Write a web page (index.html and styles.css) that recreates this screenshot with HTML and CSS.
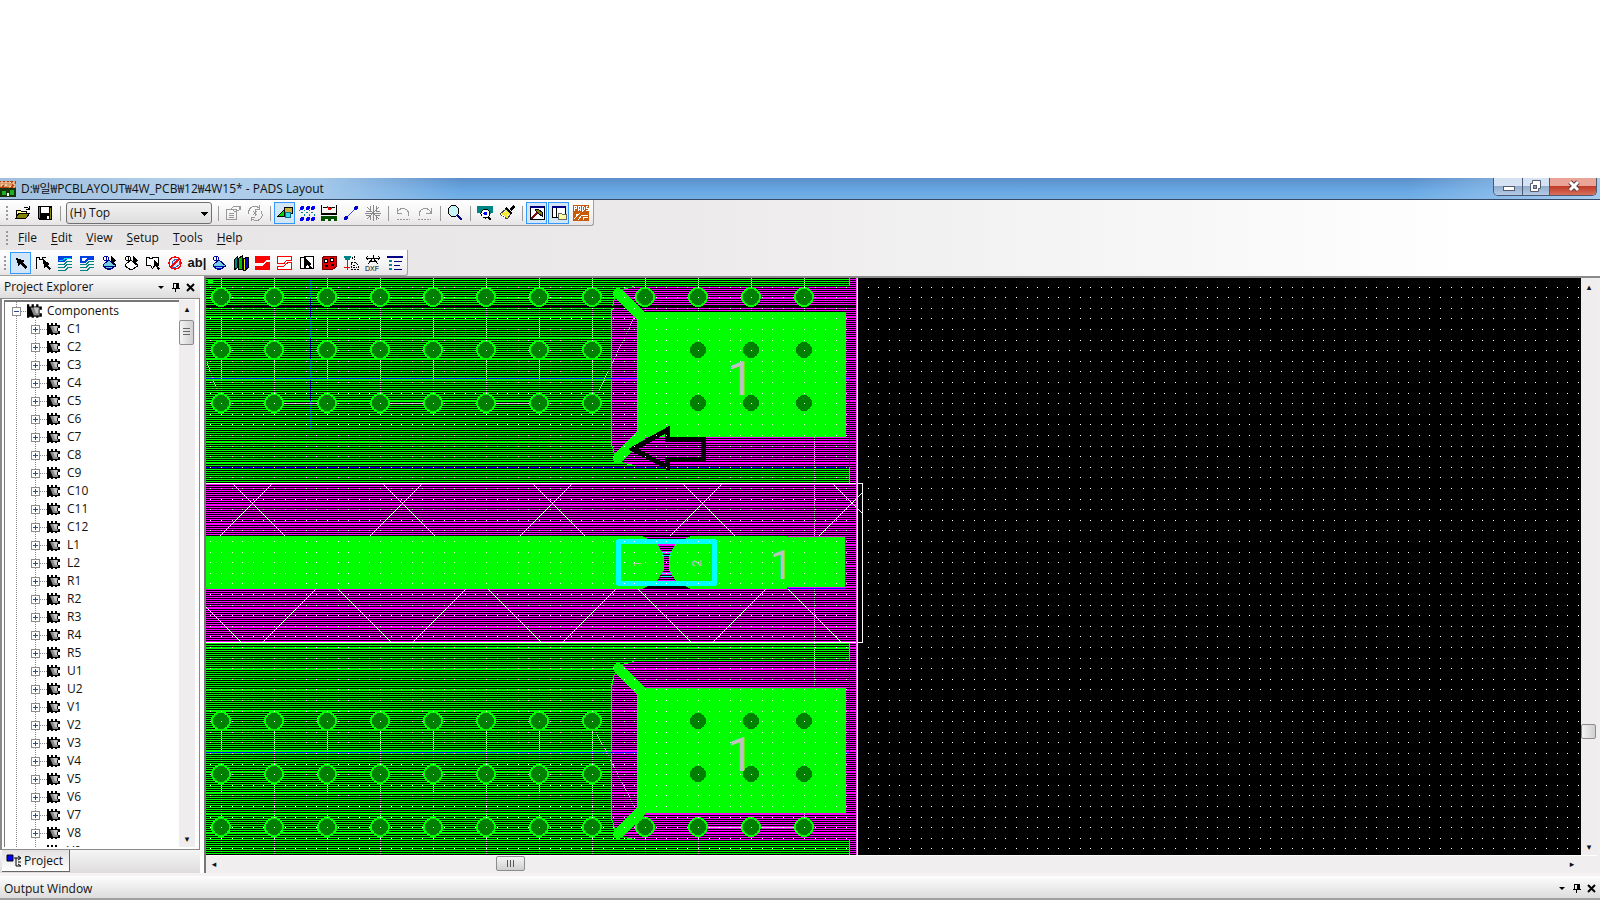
FILE: index.html
```html
<!DOCTYPE html>
<html lang="en">
<head>
<meta charset="utf-8">
<title>PADS Layout</title>
<link rel="stylesheet" href="styles.css">
</head>
<body>
<div class="app">
  <header class="titlebar">
    <svg class="logo" width="16" height="16" viewBox="0 0 16 16"><rect width="16" height="16" fill="#b5420c"/><rect y="7" width="16" height="9" fill="#17330d"/><path d="M1 6V1h2v3H1M5 6V1h2v5M5 4h2M9 1v5h1l1-1V2l-1-1zM15 1h-2v2h2v3h-2" fill="none" stroke="#fff3d0"/><path d="M2 10h4v4H2zM10 9h4v5h-4z" fill="#1fae1f"/><path d="M7 12h2v3H7z" fill="#fff"/></svg>
    <h1 class="title">D:₩일₩PCBLAYOUT₩4W_PCB₩12₩4W15* - PADS Layout</h1>
    <div class="winbtns">
      <button class="wb" aria-label="Minimize"><svg width="28" height="17"><rect x="9.500" y="8.500" width="11" height="4" fill="#fff" stroke="#555b68"/></svg></button>
      <button class="wb" aria-label="Restore"><svg width="26" height="17"><path d="M9.500 2.500h8v8h-2v3h-8v-8h2z" fill="#fff" stroke="#555b68"/><rect x="10.500" y="7.500" width="3" height="3" fill="#8fa6c6" stroke="#555b68"/></svg></button>
      <button class="wb close" aria-label="Close"><svg width="46" height="17"><path d="M20 4l8 8M28 4l-8 8" stroke="#5c4040" stroke-width="5"/><path d="M20 4l8 8M28 4l-8 8" stroke="#fff" stroke-width="3"/></svg></button>
    </div>
  </header>

  <div class="bars">
    <div class="toolbar main-tools">
      <span class="grip"></span>
      <button class="tb" aria-label="Open"><svg viewBox="0 0 16 16"><path d="M1 13V5h4l1 1h5v3" fill="#ffff9c" stroke="#000"/><path d="M1 13l3-5h11l-4 5z" fill="#848400" stroke="#000"/><path d="M9 3q3-2 5 1M14 1v3h-3" fill="none" stroke="#000"/></svg></button>
      <button class="tb" aria-label="Save"><svg viewBox="0 0 16 16"><path d="M1 1h14v14H2l-1-1z"/><path d="M4 2h8v6H4z" fill="#fff"/><path d="M2 2h1v11H2zM13 3h1v11h-1z" fill="#848400"/><path d="M10 11h2v3h-2z" fill="#fff"/></svg></button>
      <span class="sep"></span>
      <select class="layer" aria-label="Layer"><option>(H) Top</option></select>
      <span class="sep"></span>
      <button class="tb" aria-label="Properties"><svg viewBox="0 0 16 16" fill="none" stroke="#999"><path d="M1.500 4.500h10v10h-10zM4 8h5M4 10h5M4 12h5M6 4l3-3 5 1v3l-4 2-2-2M12 1h3v4"/></svg></button>
      <button class="tb" aria-label="Cycle"><svg viewBox="0 0 16 16" fill="none" stroke="#999"><path d="M2 9a6 6 0 0 1 10-6M14 6a6 6 0 0 1-10 7M12 0v4H8M4 16v-4h4M6 6l4 4M10 6l-4 4M8 5v6"/></svg></button>
      <span class="sep"></span>
      <button class="tb on" aria-label="Drafting Toolbar"><svg viewBox="0 0 16 16"><path d="M7.500 2.500h8v6h-8z" fill="#c8b43c" stroke="#000"/><path d="M1 11l6-6v6z" fill="#00d800" stroke="#000"/><circle cx="11" cy="10" r="3" fill="#38d8f0" stroke="#087080"/></svg></button>
      <button class="tb" aria-label="Design Toolbar"><svg viewBox="0 0 16 16" fill="#00f"><circle cx="3" cy="3" r="2"/><circle cx="9" cy="3" r="2"/><circle cx="14" cy="3" r="2"/><circle cx="3" cy="14" r="2"/><circle cx="9" cy="14" r="2"/><circle cx="14" cy="14" r="2"/><path d="M0 5l5 4v3M5 5l5 4v3M10 5l5 4v3" fill="none" stroke="#088" stroke-dasharray="2 1"/></svg></button>
      <button class="tb" aria-label="Dimensioning Toolbar"><svg viewBox="0 0 16 16"><path d="M0 0h1v9H0zM15 0h1v9h-1zM0 8h16v2H0z"/><path d="M2 2.500h12" stroke="#000"/><path d="M6 1l3 4 2-3M7 4h3" stroke="red" fill="none"/><path d="M0 11h16v5h-3v-2h-3v2H7v-2H4v2H0z" fill="#005000"/></svg></button>
      <button class="tb" aria-label="Route"><svg viewBox="0 0 16 16"><path d="M3 13L13 3" stroke="#44f"/><circle cx="3" cy="13" r="2" fill="#00c"/><circle cx="13" cy="3" r="2" fill="#00c"/></svg></button>
      <button class="tb" aria-label="ECO Toolbar"><svg viewBox="0 0 16 16" fill="none" stroke="#888"><path d="M8 0v16M0 8h16M2 2l12 12M14 2L2 14M5 1v5H1M11 1v5h4M5 15v-5H1M11 15v-5h4"/></svg></button>
      <span class="sep"></span>
      <button class="tb" aria-label="Undo"><svg viewBox="0 0 16 16" fill="none" stroke="#999"><path d="M2 3v5h5M2 8q3-6 8-4t3 7"/><path d="M2 14h13" stroke-dasharray="2 1"/></svg></button>
      <button class="tb" aria-label="Redo"><svg viewBox="0 0 16 16" fill="none" stroke="#999"><path d="M14 3v5H9M14 8q-3-6-8-4t-3 7"/><path d="M1 14h13" stroke-dasharray="2 1"/></svg></button>
      <span class="sep"></span>
      <button class="tb" aria-label="Zoom"><svg viewBox="0 0 16 16"><circle cx="6.500" cy="6" r="5.500" fill="#c8f4f8" stroke="#000"/><path d="M10 10l5 5" stroke="#000084" stroke-width="2"/></svg></button>
      <span class="sep"></span>
      <button class="tb" aria-label="Board"><svg viewBox="0 0 16 16"><path d="M0 1h16v7h-2l-2 2H4L2 8H0z" fill="#008484"/><circle cx="8.500" cy="8.500" r="4.500" fill="#fff" stroke="#000"/><circle cx="8.500" cy="8.500" r="2" fill="#00f"/><path d="M11 12l3 3" stroke="#000" stroke-width="2"/></svg></button>
      <button class="tb" aria-label="Redraw"><svg viewBox="0 0 16 16"><path d="M10 4l4-4 2 2-4 4z"/><path d="M7 4l5 5-4 5-7-5z" fill="#f4e838" stroke="#444"/><path d="M2 9l6 5M5 6l5 5" stroke="#fff" stroke-dasharray="1 1"/><path d="M7 3l6 6" stroke="#000" stroke-width="2"/></svg></button>
      <span class="sep"></span>
      <button class="tb on" aria-label="Output Window"><svg viewBox="0 0 16 16"><path d="M1 1.500h14v13H1z" fill="#fff" stroke="#000"/><path d="M1 1h14v2H1z" fill="#000084"/><path d="M2 14l7-7" stroke="#801010" stroke-width="2"/><path d="M6 5l3-1 4 3v4l-3-2z" fill="#848400" stroke="#000"/></svg></button>
      <button class="tb on" aria-label="Project Explorer"><svg viewBox="0 0 16 16"><path d="M1 1.500h13v11H1z" fill="#fff" stroke="#000"/><path d="M1 1h13v2H1z" fill="#000084"/><path d="M5 3v10" stroke="#000"/><path d="M7 14V8h3l1 1h4v5z" fill="#ffff9c" stroke="#666"/></svg></button>
      <button class="tb" aria-label="PADS Router"><svg viewBox="0 0 16 16"><path d="M0 0h16v16H0z" fill="#c85a0a"/><path d="M1 6V1h2v2H1M5 6V1h2v5M5 4h2M9 1v5h1l1-1V2l-1-1zM15 1h-2v2h2v2h-2M1 14l4-4 2-2M5 15l4-5h6M10 15v-2l5-1" fill="none" stroke="#fff"/><circle cx="4" cy="10" r="1.500" fill="#fff"/></svg></button>
    </div>

    <nav class="menu">
      <span class="grip"></span>
      <button><u>F</u>ile</button><button><u>E</u>dit</button><button><u>V</u>iew</button><button><u>S</u>etup</button><button><u>T</u>ools</button><button><u>H</u>elp</button>
    </nav>

    <div class="toolbar draw-tools">
      <span class="grip"></span>
      <button class="tb on" aria-label="Select"><svg viewBox="0 0 16 16"><path d="M3 3l9 3-3 1 5 5-2 2-5-5-1 3z"/></svg></button>
      <button class="tb" aria-label="2D Line"><svg viewBox="0 0 16 16"><path d="M1.500 14V2.500h3v2h3v-2h3" fill="none" stroke="#000"/><path d="M8 4l7 5-2 1 3 4-2 1-3-4-2 2z"/></svg></button>
      <button class="tb" aria-label="Copper"><svg viewBox="0 0 16 16"><path d="M1 1h14v3H10L7 7H1z" fill="#0040e0"/><path d="M2 5h4l3-2h5" stroke="#00e0e0" fill="none"/><path d="M1 9.500h6l3-3h5M1 12.500h6l3-3h5M1 15.500h7l3-3h4" fill="none" stroke="#008484"/></svg></button>
      <button class="tb" aria-label="Copper Cutout"><svg viewBox="0 0 16 16"><path d="M2 7V2h12v2H9L6 7z" fill="#fff" stroke="#0040e0" stroke-width="2"/><path d="M1 9.500h6l3-3h5M1 12.500h6l3-3h5M1 15.500h7l3-3h4" fill="none" stroke="#008484"/></svg></button>
      <button class="tb" aria-label="Copper Pour"><svg viewBox="0 0 16 16"><path d="M3 9l5-4 7 6-7 4-6-4z" fill="#70d0e0" stroke="#000080"/><path d="M2 11h11M4 13h7" stroke="#000080"/><circle cx="5" cy="3.500" r="2.500" fill="#fff" stroke="#0000a0"/><path d="M5 1v7" stroke="#0000a0"/><path d="M10 1l5 5-2 1 2 3-1 1-3-4-1 1z"/></svg></button>
      <button class="tb" aria-label="Pour Cutout"><svg viewBox="0 0 16 16"><path d="M3 9l5-4 7 6-7 4-6-4z" fill="#fff" stroke="#000"/><circle cx="5" cy="3.500" r="2.500" fill="#fff" stroke="#000"/><path d="M5 1v7" stroke="#000"/><path d="M10 1l5 5-2 1 2 3-1 1-3-4-1 1z"/></svg></button>
      <button class="tb" aria-label="Board Outline"><svg viewBox="0 0 16 16"><path d="M1.500 10.500v-8h3v1h3v-1h6v8h-4l-2 3-2-3z" fill="#fff" stroke="#000"/><path d="M9 5l6 5-2 1 2 3-2 1-2-4-2 1z"/></svg></button>
      <button class="tb" aria-label="Keepout"><svg viewBox="0 0 16 16" shape-rendering="auto"><path d="M5 12V7l4-3 3 2v4l-4 3z" fill="#d4e8ff" stroke="#36c"/><circle cx="8" cy="8" r="6" fill="none" stroke="red" stroke-width="1.500"/><path d="M4 12l8-8" stroke="red" stroke-width="1.500"/></svg></button>
      <button class="tb abl" aria-label="Text">ab|</button>
      <button class="tb" aria-label="Flood"><svg viewBox="0 0 16 16"><path d="M3 9l5-4 7 6-7 4-6-4z" fill="#70d0e0" stroke="#000080"/><path d="M2 11h11M4 13h7" stroke="#0000c0"/><circle cx="5" cy="3.500" r="2.500" fill="#fff" stroke="#0000a0"/><path d="M5 1v7" stroke="#0000a0"/></svg></button>
      <button class="tb" aria-label="Library"><svg viewBox="0 0 16 16"><path d="M1 5l3-3v11l-3 2z" fill="#008484" stroke="#000"/><path d="M5 4l4-3v13H5z" fill="#00c000" stroke="#000"/><path d="M10 3h2v12h-2z" fill="#e8e800" stroke="#000"/><path d="M12 2h3v11l-3 2z" fill="#0000d8" stroke="#000"/></svg></button>
      <button class="tb" aria-label="Plane Area"><svg viewBox="0 0 16 16" fill="#f00"><path d="M0 1h15v4h-4L8 8H0zM15 7v8H0v-4h7l4-4z"/></svg></button>
      <button class="tb" aria-label="Plane Cutout"><svg viewBox="0 0 16 16" fill="#fff" stroke="#f00"><path d="M.5 1.500h14V5H10L7 8.500H.5zM14.500 7.500v7H.5V11H7l4-3.500z"/></svg></button>
      <button class="tb" aria-label="Auto Plane"><svg viewBox="0 0 16 16"><path d="M1.500 2.500h5v11h-5zM5.500 1.500h9v12h-9z" fill="#fff" stroke="#000"/><path d="M7 4l6 5-2 1 2 3-2 1-2-4-2 1z"/></svg></button>
      <button class="tb" aria-label="Hatch"><svg viewBox="0 0 16 16"><path d="M3 1h12v11l-3 2H1V4z" fill="#e00000" stroke="#700"/><circle cx="5" cy="6" r="2" fill="#fff" stroke="#000"/><circle cx="11" cy="5" r="2" fill="#fff" stroke="#000"/><path d="M4 11h3M10 10h3" stroke="#000" stroke-width="2"/></svg></button>
      <button class="tb" aria-label="Drafting Options"><svg viewBox="0 0 16 16"><path d="M1 2h7M2 4h5" stroke="#008484" stroke-width="2"/><path d="M4 5v10M1 12h6" stroke="red"/><path d="M9.500 2v3M11.500 1v4M8 7.500h5l2 3v4H8zM10 10h3M10 12h4" fill="none" stroke="#000" stroke-dasharray="2 1"/></svg></button>
      <button class="tb dxf" aria-label="Import DXF"><svg viewBox="0 0 16 16"><path d="M1 3h14M3 1L1 3l2 2M13 1l2 2-2 2M8 0v3l-5 6M8 3l5 6M5 6h6" fill="none" stroke="#000"/><text x="0" y="16">DXF</text></svg></button>
      <button class="tb" aria-label="Options"><svg viewBox="0 0 16 16"><path d="M0 1h16v2H0z" fill="#000084"/><path d="M7 6h8M7 10h6M7 14h8" stroke="#000084"/><path d="M2 6h3M2 10h3M2 14h3" stroke="#0884a0" stroke-width="2"/></svg></button>
    </div>
  </div>

  <main class="work">
    <aside class="explorer">
      <div class="panel-head"><h2>Project Explorer</h2>
        <button class="pb" aria-label="Menu"><svg width="9" height="9"><path d="M2 3h6L5 6z"/></svg></button>
        <button class="pb" aria-label="Pin"><svg width="9" height="9"><path d="M2 0h6v5h1v1H5v3H4V6H1V5h1zM3 1v4h2V1z"/></svg></button>
        <button class="pb" aria-label="Close"><svg width="9" height="9"><path d="M1 1l7 7M8 1L1 8" stroke="#000" stroke-width="2"/></svg></button>
      </div>
      <div class="tree-frame">
        <ul class="tree" id="tree"><li class="root"><span class="box"></span><svg class="chip"><use href="#chip"/></svg>Components</li></ul>
        <div class="vscroll"><button aria-label="Scroll up">▴</button><span class="thumb"></span><button aria-label="Scroll down">▾</button></div>
      </div>
      <div class="tabs"><button class="tab"><svg width="16" height="14"><path d="M1 1h6v6H1z" fill="#00f" stroke="#000"/><path d="M8 4h6M10 4v8h5M12 2l3 2-3 2M12 8h3M12 10l3 2" fill="none" stroke="#000"/></svg>Project</button></div>
    </aside>

    <section class="editor">
      <svg class="board" role="img" aria-label="Board layout">
        <defs>
          <symbol id="chip" viewBox="0 0 14 14"><path d="M0 1h2v2h2V1h2v2h2V1h2v2h3v3h-2v3h2v3h-3v1H8v-1H6v1H4v-1H2v1H0z"/><path d="M3 4h8v2h-1v3h1v2H6z" fill="#888"/><path d="M6 4h4v5H8z" fill="#c4c4c4"/></symbol>
          <path id="rows" d="M20 277V298M20 298V317M20 317V338M20 338V359M20 359V380M20 380V401M20 401V442M20 442V463M20 463V484M20 484V505M20 505V524M20 524V545M20 545V566M20 566V587M20 587V608M20 608V627M20 627V648M20 648V669M20 669V690M20 690V711M20 711V730M20 730V751M20 751V772M20 772V793M20 793V814M20 814V833M20 833V856" stroke-width="40" stroke-dasharray="1 1"/>
          <pattern id="green" width="40" height="900" patternUnits="userSpaceOnUse"><use href="#rows" class="g"/></pattern>
          <pattern id="mag" width="40" height="900" patternUnits="userSpaceOnUse"><use href="#rows" class="m"/></pattern>
          <pattern id="grid" x="221" y="297" width="53" height="53" patternUnits="userSpaceOnUse"><path d="M0 .5h53M0 11.500h53M0 21.500h53M0 32.500h53M0 43.500h53" stroke="#fff" stroke-dasharray="1 10 1 9 1 10 1 9 1 10"/></pattern>
          <g id="via"><circle r="10" fill="#0f0"/><circle r="8" fill="#008000"/></g>
          <g id="row"><use href="#via" x="221"/><use href="#via" x="274"/><use href="#via" x="327"/><use href="#via" x="380"/><use href="#via" x="433"/><use href="#via" x="486"/><use href="#via" x="539"/><use href="#via" x="592"/></g>
          <g id="row4"><use href="#via" x="645"/><use href="#via" x="698"/><use href="#via" x="751"/><use href="#via" x="804"/></g>
          <g id="holes" fill="#008000"><circle cx="698" cy="0" r="8"/><circle cx="751" cy="0" r="8"/><circle cx="804" cy="0" r="8"/><circle cx="698" cy="53" r="8"/><circle cx="751" cy="53" r="8"/><circle cx="804" cy="53" r="8"/></g>
          <path id="crossTop" d="M233 484l52 52M272 484l-52 52"/>
          <path id="crossLow" d="M188 589l53 53M316 589l-53 53"/>
        </defs>
        <g class="sheet" transform="translate(-206 -278)">
          <rect x="206" y="278" width="643" height="205" fill="url(#green)"/>
          <rect x="206" y="643" width="643" height="212" fill="url(#green)"/>
          <rect x="849" y="278" width="8" height="577" fill="url(#mag)"/>
          <rect x="206" y="484" width="650" height="158" fill="url(#mag)"/>
          <g fill="#000"><path id="pourA" d="M849 286H634L620 290 614 300 611 312V444L615 456 623 463 636 466H849z"/><path id="pourB" d="M849 661H634L620 665 614 675 611 687V818L615 830 623 837 636 840H849z"/></g>
          <path d="M849 286H634L620 290 614 300 611 312V444L615 456 623 463 636 466H849zM849 661H634L620 665 614 675 611 687V818L615 830 623 837 636 840H849z" fill="url(#mag)"/>
          <path class="g" d="M634 286.500L620 290 614 300 611.500 312V444L615 456 623 463 636 466M634 661.500L620 665 614 675 611.500 687V818L615 830 623 837 636 840M849.500 278V286M849.500 466V483M849.500 643V661M849.500 840V855M206 643.500H849M206 853.500H849"/>
          <path d="M206 307H856" stroke="#000" stroke-width="2"/>
          <path d="M206 378.500H849M206 467.500H849M206 752.500H849M849.500 378V467M849.500 662V752" stroke="#00f"/>
          <path d="M310.500 280V430" stroke="#00f" stroke-dasharray="1 1"/>
          <rect x="208" y="280" width="5" height="4" fill="#0f0"/>
          <path class="w" stroke-dasharray="1 1" d="M221.500 278V403M274.500 278V403M327.500 278V403M380.500 278V403M433.500 278V403M486.500 278V403M539.500 278V403M592.500 278V403M645.500 278V312M698.500 278V312M751.500 278V312M804.500 278V312M221.500 721V855M274.500 721V855M327.500 721V855M380.500 721V855M433.500 721V855M486.500 721V855M539.500 721V855M592.500 721V855M645.500 827V855M698.500 827V855M804.500 813V827M814.500 437V536M814.500 589V687M207 362L218 393M597 395L634 318M595 730L634 806"/>
          <path class="w" d="M274 403.500H327M380 403.500H433M486 403.500H539M698 827.500H804"/>
          <path d="M618 293L642 317M618 458L642 434M618 668L642 692M618 834L642 810" class="g" stroke-width="10" stroke-linecap="round"/>
          <path d="M637 312H846V437H637zM637 688H846V813H637zM206 536H787V537H845V587H787V589H206z" fill="#0f0"/>
          <path d="M787 588.500H846" stroke="#00f"/>
          <g class="x"><use href="#crossTop"/><use href="#crossTop" x="150"/><use href="#crossTop" x="300"/><use href="#crossTop" x="450"/><path d="M833 484l29 29M862 493l-43 43"/>
          <path d="M206 607l35 35M316 589l-53 53"/><use href="#crossLow" x="150"/><use href="#crossLow" x="300"/><use href="#crossLow" x="450"/><path d="M788 589l53 53"/></g>
          <path d="M206 483.500H862.500V642.500H206" fill="none" stroke="#fff"/>
          <path d="M856.500 278V855" stroke="#ff60ff" stroke-width="2"/><path d="M857.500 278V855" stroke="#fff"/>
          <use href="#row" y="297"/><use href="#row" y="350"/><use href="#row" y="403"/>
          <use href="#row" y="721"/><use href="#row" y="774"/><use href="#row" y="827"/>
          <use href="#row4" y="297"/><use href="#row4" y="827"/>
          <use href="#holes" y="350"/><use href="#holes" y="721"/>
          <path d="M642 536H691L685 539H648zM642 589H691L685 586H648z"/><path d="M645 537.500H688" class="m"/>
          <path d="M657 543H676L669 556V570L676 581H657L664 570V556z"/><path d="M657 543H676L669 556V570L676 581H657L664 570V556z" fill="url(#mag)"/>
          <path d="M662 552.500H671M662 555.500H671M662 573.500H671M661 576.500H672" stroke="#0ff"/>
          <rect x="618.500" y="541.500" width="96" height="42" fill="none" stroke="#0ff" stroke-width="5" stroke-linejoin="round"/>
          <path d="M633 449L667 430V439H703V459H667V467z" fill="none" stroke="#000" stroke-width="5"/>
          <rect x="206" y="278" width="3000" height="2000" fill="url(#grid)"/>
          <g class="des"><text x="727" y="395" font-size="48">1</text><text x="727" y="771" font-size="48">1</text><text x="770" y="579" font-size="40">1</text><text transform="translate(641 567) rotate(-90)" font-size="11">1</text><text transform="translate(701 567) rotate(-90)" font-size="13">2</text></g>
        </g>
      </svg>
      <div class="vscroll ev"><button aria-label="Scroll up">▴</button><span class="thumb"></span><button aria-label="Scroll down">▾</button></div>
      <div class="hscroll"><button aria-label="Scroll left">◂</button><span class="thumb"></span><button aria-label="Scroll right">▸</button></div>
    </section>
  </main>

  <footer class="output panel-head"><h2>Output Window</h2>
    <button class="pb" aria-label="Menu"><svg width="9" height="9"><path d="M2 3h6L5 6z"/></svg></button>
    <button class="pb" aria-label="Pin"><svg width="9" height="9"><path d="M2 0h6v5h1v1H5v3H4V6H1V5h1zM3 1v4h2V1z"/></svg></button>
    <button class="pb" aria-label="Close"><svg width="9" height="9"><path d="M1 1l7 7M8 1L1 8" stroke="#000" stroke-width="2"/></svg></button>
  </footer>
</div>
<script src="tree.js"></script>
</body>
</html>
```
FILE: styles.css
```css
* { box-sizing: border-box; }
body { margin: 0; background: #fff; color: #111; font: 12px/18px "Open Sans", "Noto Sans CJK KR", sans-serif; overflow: hidden; }
button { font: inherit; color: inherit; border: 0; padding: 0; margin: 0; background: none; }
h1, h2 { margin: 0; font: inherit; white-space: nowrap; }
.app { display: flex; flex-direction: column; height: 100vh; padding-top: 178px; }

.titlebar { display: flex; align-items: center; flex: none; height: 22px; border-bottom: 1px solid #344a66; background: linear-gradient(90deg, #9fbfe0 0, #b4d0ea 200px, #a4c8ea 320px, rgba(100, 164, 224, 0) 460px, rgba(100, 164, 224, 0) 88%, #a8ccf0 100%), linear-gradient(#5b8fc8, #68a8e4 60%, #74b0e6); }
.logo { flex: none; }
.title { flex: 1; padding-left: 5px; }
.winbtns { display: flex; align-self: flex-start; margin-right: 3px; border: 1px solid #4a5870; border-top: 0; border-radius: 0 0 5px 5px; overflow: hidden; }
.wb { height: 17px; background: linear-gradient(#d4e2f4 45%, #92accc 50%, #b4cce8); border-right: 1px solid #4a5870; }
.wb svg { display: block; }
.close { background: linear-gradient(#eaa498 45%, #c03c28 50%, #d8705c); border-right: 0; }

.bars { flex: none; background: linear-gradient(90deg, #e6e4e4, #ebe9e9 40%, #fff 92%); }
.toolbar { display: flex; align-items: center; width: max-content; height: 26px; padding: 1px 1px 0 4px; background: linear-gradient(#fff, #f4f3f3 60%, #e6e4e4); border-right: 1px solid #a0a0a0; border-bottom: 1px solid #a0a0a0; border-radius: 0 0 3px 0; }
.grip { width: 8px; height: 14px; background: repeating-linear-gradient(#999 0 2px, transparent 2px 4px) 2px 0 / 2px 100% no-repeat; }
.draw-tools { padding-left: 2px; }
.tb { display: grid; place-items: center; width: 22px; height: 22px; }
.tb svg { width: 16px; height: 16px; shape-rendering: crispEdges; overflow: visible; }
.on { width: 21px; margin-right: 1px; border: 1px solid #3399ff; background: #d2e6f8; }
.sep { width: 8px; height: 15px; background: linear-gradient(#999, #999) 4px 0 / 1px 100% no-repeat; }
.layer { appearance: none; width: 146px; height: 22px; margin: 0 2px; padding: 0 4px 1px 3px; border: 1px solid #707070; border-radius: 3px; font: inherit; color: #111; background: linear-gradient(to bottom right, #000 50%, transparent 50%) 138px 9px / 4px 4px no-repeat, linear-gradient(to bottom left, #000 50%, transparent 50%) 134px 9px / 4px 4px no-repeat, linear-gradient(#f2f2f2, #dedede); }
.abl { font: bold 13px/18px "Liberation Sans", sans-serif; }
.dxf text { font: 7px "Liberation Sans", sans-serif; }
.menu { display: flex; align-items: center; height: 24px; padding-left: 4px; }
.menu .grip { width: 7px; }
.menu button { padding: 0 7px; }
.menu u { text-underline-offset: 2px; }

.work { flex: 1; min-height: 0; display: flex; }
.explorer { display: flex; flex-direction: column; width: 200px; flex: none; background: #f0eeee; }
.panel-head { display: flex; align-items: center; background: linear-gradient(#fdfdfd, #dedcdc); }
.explorer .panel-head { height: 22px; padding: 0 2px 0 4px; }
.panel-head h2 { flex: 1; }
.pb { width: 15px; height: 15px; display: grid; place-items: center; }
.tree-frame { flex: 1; min-height: 0; display: flex; padding: 1px 4px 2px 2px; border: 1px solid #8a8a8a; border-left-width: 2px; background: #fff; }
.tree { flex: 1; margin: 0; padding: 0; list-style: none; overflow: hidden; border: 1px solid #777; border-width: 2px 0 0 1px; background: repeating-linear-gradient(#888 0 1px, transparent 1px 2px) 11px 0 / 1px 100% no-repeat; }
.tree li { display: flex; align-items: center; height: 18px; padding-left: 26px; background: repeating-linear-gradient(#888 0 1px, transparent 1px 2px) 30px 0 / 1px 100% no-repeat, repeating-linear-gradient(90deg, #888 0 1px, transparent 1px 2px) 31px 9px / 11px 1px no-repeat; }
.tree .root { padding-left: 7px; background: repeating-linear-gradient(90deg, #888 0 1px, transparent 1px 2px) 12px 9px / 10px 1px no-repeat; }
.box { width: 9px; height: 9px; flex: none; border: 1px solid #8c8c8c; background: linear-gradient(#2a4a8c, #2a4a8c) 1px 3px / 5px 1px no-repeat, linear-gradient(#2a4a8c, #2a4a8c) 3px 1px / 1px 5px no-repeat, #fff; }
.root .box { background: linear-gradient(#2a4a8c, #2a4a8c) 1px 3px / 5px 1px no-repeat, #fff; }
.chip { width: 14px; height: 14px; flex: none; margin: 0 6px 0 7px; }
.root .chip { width: 16px; height: 16px; margin: 0 4px 0 6px; }
.vscroll { display: flex; flex-direction: column; width: 16px; flex: none; background: #efeded; }
.vscroll button, .hscroll button { display: grid; place-items: center; width: 16px; height: 17px; font: 9px/12px "DejaVu Sans", sans-serif; }
.vscroll button:last-child { margin-top: auto; }
.thumb { display: block; border: 1px solid #8c8c8c; border-radius: 2px; background: linear-gradient(90deg, #f4f4f4, #cfcfcf); }
.explorer .thumb { width: 15px; height: 25px; margin-top: 3px; background: repeating-linear-gradient(#666 0 1px, transparent 1px 3px) 3px 7px / 7px 8px no-repeat, linear-gradient(90deg, #f4f4f4, #cfcfcf); }
.tabs { height: 23px; flex: none; padding-left: 2px; background: linear-gradient(#f6f5f5, #dedcdc); }
.tab { display: flex; align-items: center; height: 22px; padding: 0 6px 0 4px; border: 1px solid #666; border-width: 0 1px 1px 0; background: linear-gradient(#e2e0e0, #fff); }
.tab svg { margin-right: 2px; }

.editor { flex: 1; min-width: 0; display: grid; grid-template: minmax(0, 1fr) 18px / minmax(0, 1fr) 16px; padding-right: 3px; margin-left: 4px; border-top: 2px solid #8a8a8a; border-left: 2px solid #777; background: #f0eeee; }
.board { display: block; width: 100%; height: 100%; background: #000; shape-rendering: crispEdges; }
.g { stroke: #0f0; fill: none; }
.m { stroke: #f0f; fill: none; }
.w { stroke: #c8c8c8; fill: none; }
.x { stroke: #fff; fill: none; }
.des { font-family: Roboto, sans-serif; font-weight: 400; fill: #c0c0c0; }
.ev .thumb { width: 15px; height: 15px; margin-top: 429px; }
.hscroll { grid-column: 1 / 3; display: flex; align-items: center; padding: 0 17px 2px 0; border-top: 1px solid #fff; }
.hscroll .thumb { width: 29px; height: 15px; margin-left: 274px; background: repeating-linear-gradient(90deg, #555 0 1px, transparent 1px 3px) 10px 3px / 8px 7px no-repeat, linear-gradient(#f4f4f4, #cfcfcf); }
.hscroll button:last-child { margin-left: auto; }
.output { flex: none; height: 27px; padding: 3px 1px 0 4px; border-top: 3px solid #f4f2f2; border-bottom: 2px solid #a0a0a0; }
```
FILE: tree.js
```javascript
const groups = [["C", 12], ["L", 2], ["R", 5], ["U", 2], ["V", 9]];
const tree = document.getElementById("tree");
for (const [prefix, count] of groups) {
  for (let n = 1; n <= count; n++) {
    const item = document.createElement("li");
    item.innerHTML = '<span class="box"></span><svg class="chip"><use href="#chip"/></svg>' + prefix + n;
    tree.append(item);
  }
}
```
